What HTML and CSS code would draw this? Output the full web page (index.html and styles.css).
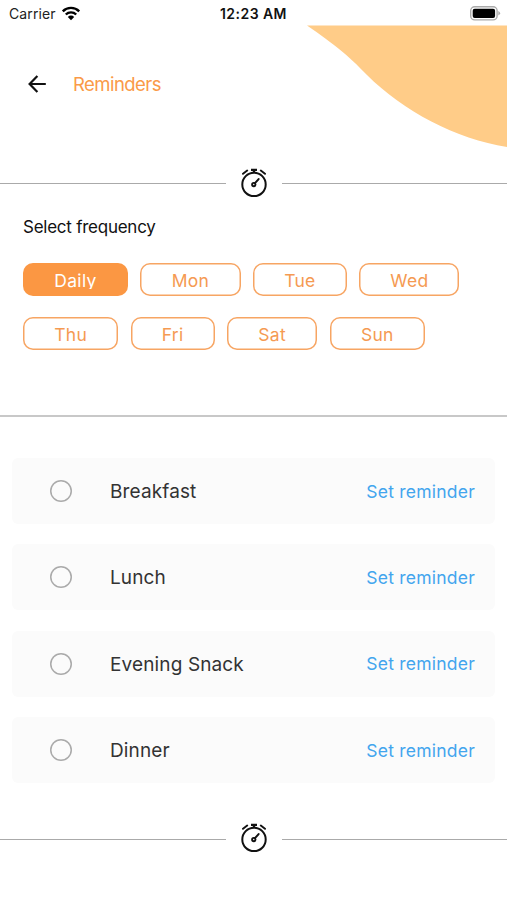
FILE: index.html
```html
<!DOCTYPE html>
<html lang="en">
<head>
<meta charset="utf-8">
<title>Reminders</title>
<link rel="stylesheet" href="styles.css">
</head>
<body>
<svg width="0" height="0" class="defs">
  <symbol id="timer" viewBox="0 0 28 30">
    <g fill="none" stroke="#111">
      <circle cx="14" cy="16.4" r="11.7" stroke-width="2"/>
      <path d="M11 1.9h6M14 1.6v3.4" stroke-width="2.4"/>
      <path d="M3 5.8l4.2-3.2M25 5.8l-4.2-3.2" stroke-width="1.9" stroke-linecap="round"/>
      <path d="M15 15.2l3.6-4.1" stroke-width="2" stroke-linecap="round"/>
      <circle cx="13.8" cy="16.6" r="1.7" stroke-width="1.9"/>
    </g>
  </symbol>
</svg>
<header class="status">
  <span class="carrier">Carrier</span>
  <svg class="wifi" width="20" height="15" viewBox="0 0 20 15"><g fill="none" stroke="#000" stroke-width="2.4"><path d="M1.8 5.3a11.6 11.6 0 0 1 16.4 0"/><path d="M4.8 8.5a7.4 7.4 0 0 1 10.4 0"/></g><path d="M10 14.2l-3.2-3.3a4.6 4.6 0 0 1 6.4 0z"/></svg>
  <span class="time">12:23 AM</span>
  <svg class="battery" width="31" height="15" viewBox="0 0 31 15"><rect x=".7" y=".7" width="26.4" height="13.2" rx="4" fill="#fff" stroke="#aaa" stroke-width="1.4"/><rect x="2.7" y="2.7" width="22.4" height="9.2" rx="2"/><path d="M28.3 5v4.6q1.8-.8 1.8-2.3t-1.8-2.3z" fill="#aaa"/></svg>
</header>
<svg class="blob" width="201" height="124" viewBox="0 0 201 124"><path d="M1 .5H201V122C150 114 97 86 61 50C41 29 29 20 1 .5Z" fill="#ffcc88"/></svg>
<nav class="bar">
  <svg class="back" width="20" height="20" viewBox="0 0 20 20"><path d="M18.8 10H3M10.4 2L2.6 10l7.8 8" fill="none" stroke="#111" stroke-width="2.2"/></svg>
  <h1 class="title">Reminders</h1>
</nav>
<div class="divider"><i></i><svg width="28" height="30"><use href="#timer"/></svg><i></i></div>
<section class="frequency">
  <h2 class="label">Select frequency</h2>
  <div class="chips">
    <button class="chip daily"><span>Daily</span></button>
    <button class="chip mon"><span>Mon</span></button>
    <button class="chip tue"><span>Tue</span></button>
    <button class="chip wed"><span>Wed</span></button>
  </div>
  <div class="chips">
    <button class="chip thu"><span>Thu</span></button>
    <button class="chip fri"><span>Fri</span></button>
    <button class="chip sat"><span>Sat</span></button>
    <button class="chip sun"><span>Sun</span></button>
  </div>
</section>
<main class="meals">
  <div class="meal"><span class="radio"></span><span class="name">Breakfast</span><a class="set">Set reminder</a></div>
  <div class="meal"><span class="radio"></span><span class="name">Lunch</span><a class="set">Set reminder</a></div>
  <div class="meal"><span class="radio"></span><span class="name">Evening Snack</span><a class="set">Set reminder</a></div>
  <div class="meal"><span class="radio"></span><span class="name">Dinner</span><a class="set">Set reminder</a></div>
</main>
<div class="divider bottom"><i></i><svg width="28" height="30"><use href="#timer"/></svg><i></i></div>
</body>
</html>
```
FILE: styles.css
```css
* { box-sizing: border-box; }
body { margin: 0; width: 507px; height: 900px; overflow: hidden; position: relative; background: #fff; font-family: Inter, "Liberation Sans", sans-serif; color: #111; }
.defs { position: absolute; }
.status { display: grid; grid-template-columns: 61px 159px 251px 36px; height: 26px; align-items: center; }
.carrier { padding-left: 9px; font-size: 14px; line-height: 26px; letter-spacing: .1px; padding-top: 1px; color: #222; }
.wifi { margin-top: -1px; }
.time { font-size: 14px; font-weight: 600; letter-spacing: .45px; }
.battery { margin-left: -1px; }
.blob { position: absolute; right: 0; top: 25px; }
.bar { display: flex; align-items: center; height: 116px; padding-left: 27px; }
.back { margin-right: 26px; }
.title { margin: 0; font-size: 18.5px; line-height: 24px; font-weight: 400; letter-spacing: -.55px; color: #fa9a48; }
.divider { display: flex; align-items: center; justify-content: space-between; height: 30px; margin-top: 26px; }
.divider i { width: 225.5px; height: 1px; background: #aaa; }
.divider svg { display: block; }
.frequency { height: 219px; padding: 17px 0 0 23px; border-bottom: 2px solid #c8c8c8; }
.label { margin: 0 0 24px; font-size: 17px; line-height: 24px; font-weight: 400; letter-spacing: -.25px; }
.chips { display: flex; gap: 12.3px; margin-bottom: 21px; }
.chip { height: 33px; padding: 3px 0 0; border: 0; box-shadow: inset 0 0 0 1.5px #f7a563; border-radius: 10px; background: #fff; color: #f59a52; font: 400 17.5px/22px Inter, sans-serif; letter-spacing: .3px; }
.chip span { display: block; }
.daily { width: 105px; padding: 1px 0 0; background: #fb9743; box-shadow: none; color: #fff; }
.daily span { height: 19px; margin-top: -1px; overflow: hidden; }
.mon, .wed { width: 100.3px; }
.tue { width: 94px; }
.thu, .sun { width: 95.3px; }
.fri { width: 84px; }
.sat { width: 90.5px; }
.meals { display: grid; gap: 20.4px; padding: 41px 12px 0; }
.meal { display: flex; align-items: center; height: 66px; padding: 0 20px 0 38px; background: #fbfbfb; border-radius: 6px; }
.radio { width: 22px; height: 22px; box-shadow: inset 0 0 0 1.5px #aaa; border-radius: 50%; }
.name { margin: 2px 0 0 38px; font-size: 19px; line-height: 24px; color: #333; letter-spacing: .13px; }
.set { margin: 1px 0 0 auto; font-size: 17.5px; line-height: 22px; color: #42a5ee; letter-spacing: .22px; }
.bottom { margin-top: 40px; }
.bottom i { margin-top: 2px; }
```
